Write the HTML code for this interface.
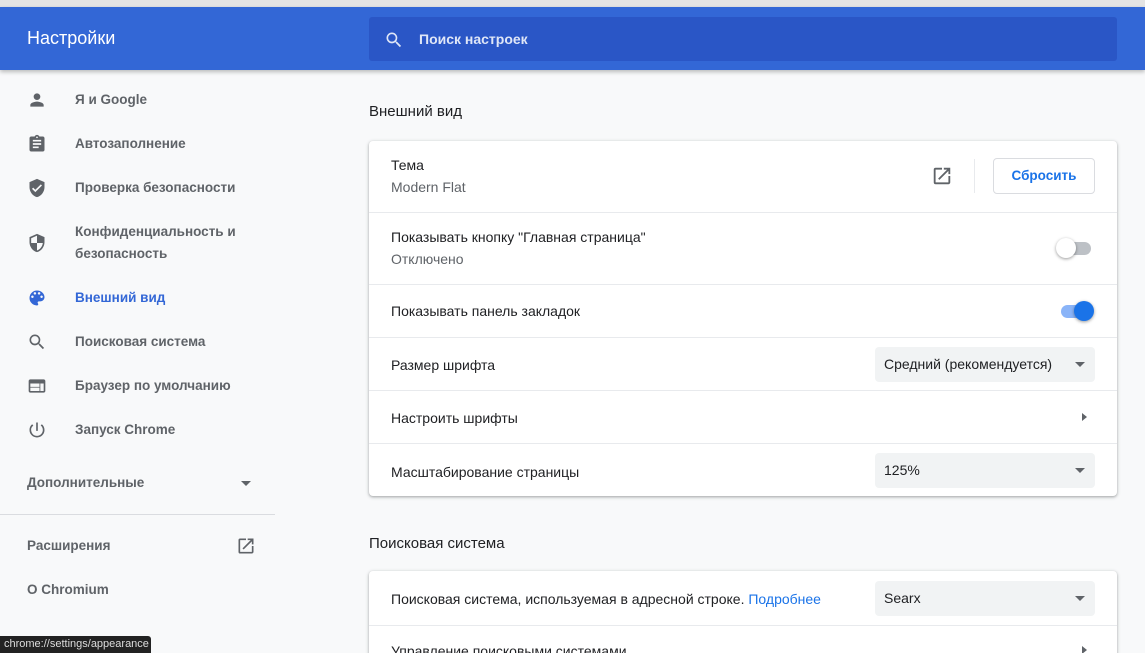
<!DOCTYPE html>
<html><head><meta charset="utf-8"><style>
*{box-sizing:border-box;margin:0;padding:0}
html,body{width:1145px;height:653px;overflow:hidden}
body{background:#f8f9fa;font-family:"Liberation Sans",sans-serif;font-size:14px;color:#202124;position:relative}
.top{position:absolute;left:0;top:0;width:1145px;height:7px;background:#e4e4e4}
.hdr{position:absolute;left:0;top:7px;width:1145px;height:63px;background:#3367d6;box-shadow:0 2px 4px rgba(0,0,0,.25)}
.hdr .t{position:absolute;left:27px;top:21px;color:#fff;font-size:18px}
.search{position:absolute;left:369px;top:10px;width:748px;height:44px;background:#2a56c6;border-radius:3px}
.search span{position:absolute;left:50px;top:14px;color:#dfe6f7;font-size:14px;font-weight:bold}
.search svg{position:absolute;left:15px;top:13px}
.nav{position:absolute;left:0;width:275px;height:44px;color:#5f6368;font-weight:bold;font-size:13.5px}
.nav svg{position:absolute;left:27px;top:50%;transform:translateY(-50%)}
.nav span{position:absolute;left:75px;top:50%;transform:translateY(-50%);line-height:22px;white-space:nowrap}
.sec{position:absolute;left:369px;font-size:15px;color:#202124}
.card{position:absolute;left:369px;width:748px;background:#fff;border-radius:4px;box-shadow:0 1px 2px rgba(60,64,67,.3),0 1px 3px 1px rgba(60,64,67,.15)}
.row{position:absolute;left:0;width:748px;border-top:1px solid #e8eaed}
.row .l{position:absolute;left:22px;white-space:nowrap}
.sel{position:absolute;left:506px;width:220px;height:35px;background:#f1f3f4;border-radius:4px}
.sel span{position:absolute;left:9px;top:9px}
.sel i{position:absolute;right:10px;top:15px;border-left:5px solid transparent;border-right:5px solid transparent;border-top:5px solid #5f6368}
.tip{position:absolute;left:0;top:636px;width:151px;height:17px;background:#222;color:#ddd;font-size:11px;padding:2px 4px;border-radius:0 3px 0 0}
</style></head><body>
<div class="top"></div>
<div class="hdr"><div class="t">Настройки</div>
<div class="search"><svg width="20" height="20" viewBox="0 0 24 24"><path fill="#dfe6f7" d="M15.5 14h-.79l-.28-.27A6.47 6.47 0 0016 9.5 6.5 6.5 0 109.5 16c1.61 0 3.09-.59 4.23-1.57l.27.28v.79l5 4.99L20.490 19l-4.99-5zm-6 0C7.01 14 5 11.990 5 9.5S7.01 5 9.5 5 14 7.01 14 9.5 11.99 14 9.5 14z"/></svg><span>Поиск настроек</span></div></div>

<div class="nav" style="top:78px"><svg width="20" height="20" viewBox="0 0 24 24"><path fill="#5f6368" d="M12 12c2.21 0 4-1.79 4-4s-1.79-4-4-4-4 1.79-4 4 1.79 4 4 4zm0 2c-2.67 0-8 1.34-8 4v2h16v-2c0-2.66-5.33-4-8-4z"/></svg><span>Я и Google</span></div>
<div class="nav" style="top:122px"><svg width="20" height="20" viewBox="0 0 24 24"><path fill="#5f6368" d="M19 3h-4.18C14.4 1.84 13.3 1 12 1s-2.4.84-2.82 2H5c-1.1 0-2 .9-2 2v14c0 1.1.9 2 2 2h14c1.1 0 2-.9 2-2V5c0-1.1-.9-2-2-2zm-7 0c.55 0 1 .45 1 1s-.45 1-1 1-1-.45-1-1 .45-1 1-1zm2 14H7v-2h7v2zm3-4H7v-2h10v2zm0-4H7V7h10v2z"/></svg><span>Автозаполнение</span></div>
<div class="nav" style="top:166px"><svg width="20" height="20" viewBox="0 0 24 24"><path fill="#5f6368" d="M12 1L3 5v6c0 5.55 3.84 10.74 9 12 5.16-1.26 9-6.45 9-12V5l-9-4zm-2 16l-4-4 1.41-1.41L10 14.170l6.59-6.59L18 9l-8 8z"/></svg><span>Проверка безопасности</span></div>
<div class="nav" style="top:210px;height:66px"><svg width="20" height="20" viewBox="0 0 24 24"><path fill="#5f6368" d="M12 1L3 5v6c0 5.55 3.84 10.74 9 12 5.16-1.26 9-6.45 9-12V5l-9-4zm0 10.99h7c-.53 4.12-3.28 7.79-7 8.94V12H5V6.3l7-3.11v8.8z"/></svg><span>Конфиденциальность и<br>безопасность</span></div>
<div class="nav" style="top:276px;color:#3367d6"><svg width="20" height="20" viewBox="0 0 24 24"><path fill="#3367d6" d="M12 3a9 9 0 000 18c.83 0 1.5-.67 1.5-1.5 0-.39-.15-.74-.39-1.01-.23-.26-.38-.61-.38-.99 0-.83.67-1.5 1.5-1.5H16c2.76 0 5-2.24 5-5 0-4.420-4.030-8-9-8zm-5.5 9c-.83 0-1.5-.67-1.5-1.5S5.67 9 6.5 9 8 9.67 8 10.5 7.33 12 6.5 12zm3-4C8.67 8 8 7.33 8 6.5S8.67 5 9.5 5s1.5.67 1.5 1.5S10.33 8 9.5 8zm5 0c-.83 0-1.5-.67-1.5-1.5S13.67 5 14.5 5s1.5.67 1.5 1.5S15.33 8 14.5 8zm3 4c-.83 0-1.5-.67-1.5-1.5S16.67 9 17.5 9s1.5.67 1.5 1.5-.67 1.5-1.5 1.5z"/></svg><span>Внешний вид</span></div>
<div class="nav" style="top:320px"><svg width="20" height="20" viewBox="0 0 24 24"><path fill="#5f6368" d="M15.5 14h-.79l-.28-.27A6.47 6.47 0 0016 9.5 6.5 6.5 0 109.5 16c1.61 0 3.09-.59 4.23-1.57l.27.28v.79l5 4.99L20.490 19l-4.99-5zm-6 0C7.01 14 5 11.99 5 9.5S7.01 5 9.5 5 14 7.01 14 9.5 11.99 14 9.5 14z"/></svg><span>Поисковая система</span></div>
<div class="nav" style="top:364px"><svg width="20" height="20" viewBox="0 0 24 24"><path fill="#5f6368" d="M20 4H4c-1.1 0-2 .9-2 2v12c0 1.1.9 2 2 2h16c1.1 0 2-.9 2-2V6c0-1.1-.9-2-2-2zm-5 14H4v-4h11v4zm0-5H4V9h11v4zm5 5h-4V9h4v9z"/></svg><span>Браузер по умолчанию</span></div>
<div class="nav" style="top:408px"><svg width="20" height="20" viewBox="0 0 24 24"><path fill="#5f6368" d="M13 3h-2v10h2V3zm4.83 2.17l-1.42 1.42A6.92 6.92 0 0119 12c0 3.87-3.13 7-7 7A6.995 6.995 0 017.58 6.58L6.17 5.17A8.932 8.932 0 003 12a9 9 0 0018 0c0-2.74-1.23-5.18-3.17-6.83z"/></svg><span>Запуск Chrome</span></div>
<div class="nav" style="top:461px"><span style="left:27px">Дополнительные</span><i style="position:absolute;left:241px;top:20px;border-left:5px solid transparent;border-right:5px solid transparent;border-top:5px solid #5f6368"></i></div>
<div style="position:absolute;left:0;top:514px;width:275px;height:1px;background:#dadce0"></div>
<div class="nav" style="top:524px"><span style="left:27px">Расширения</span><svg style="left:236px" width="20" height="20" viewBox="0 0 24 24"><path fill="#5f6368" d="M19 19H5V5h7V3H5a2 2 0 00-2 2v14a2 2 0 002 2h14c1.1 0 2-.9 2-2v-7h-2v7zM14 3v2h3.59l-9.83 9.83 1.41 1.41L19 6.41V10h2V3h-7z"/></svg></div>
<div class="nav" style="top:568px"><span style="left:27px">O Chromium</span></div>

<div class="sec" style="top:103px">Внешний вид</div>
<div class="card" style="top:141px;height:355px">
 <div class="row" style="top:0;height:71px;border-top:none"><div class="l" style="top:16px">Тема</div><div class="l" style="top:38px;color:#5f6368">Modern Flat</div>
  <svg style="position:absolute;left:562px;top:24px" width="22" height="22" viewBox="0 0 24 24"><path fill="#5f6368" d="M19 19H5V5h7V3H5a2 2 0 00-2 2v14a2 2 0 002 2h14c1.1 0 2-.9 2-2v-7h-2v7zM14 3v2h3.59l-9.83 9.83 1.41 1.41L19 6.41V10h2V3h-7z"/></svg>
  <div style="position:absolute;left:605px;top:18px;width:1px;height:34px;background:#e8eaed"></div>
  <div style="position:absolute;left:624px;top:17px;width:102px;height:36px;border:1px solid #dadce0;border-radius:4px;color:#1a73e8;font-weight:bold;font-size:13.5px;text-align:center;line-height:34px">Сбросить</div></div>
 <div class="row" style="top:71px;height:72px"><div class="l" style="top:16px">Показывать кнопку "Главная страница"</div><div class="l" style="top:38px;color:#5f6368">Отключено</div>
  <div style="position:absolute;left:694px;top:29px;width:28px;height:13px;border-radius:7px;background:#bdc1c6"></div><div style="position:absolute;left:687px;top:25px;width:20px;height:20px;border-radius:50%;background:#fff;box-shadow:0 1px 3px rgba(0,0,0,.4)"></div></div>
 <div class="row" style="top:143px;height:53px"><div class="l" style="top:18px">Показывать панель закладок</div>
  <div style="position:absolute;left:692px;top:20px;width:28px;height:13px;border-radius:7px;background:#8ab4f8"></div><div style="position:absolute;left:705px;top:16px;width:20px;height:20px;border-radius:50%;background:#1a73e8;box-shadow:0 1px 3px rgba(0,0,0,.4)"></div></div>
 <div class="row" style="top:196px;height:53px"><div class="l" style="top:19px">Размер шрифта</div><div class="sel" style="top:9px"><span>Средний (рекомендуется)</span><i></i></div></div>
 <div class="row" style="top:249px;height:53px"><div class="l" style="top:19px">Настроить шрифты</div><i style="position:absolute;left:713px;top:22px;border-top:4px solid transparent;border-bottom:4px solid transparent;border-left:5px solid #5f6368"></i></div>
 <div class="row" style="top:302px;height:53px"><div class="l" style="top:20px">Масштабирование страницы</div><div class="sel" style="top:9px"><span>125%</span><i></i></div></div>
</div>

<div class="sec" style="top:535px">Поисковая система</div>
<div class="card" style="top:571px;height:100px">
 <div class="row" style="top:0;height:54px;border-top:none"><div class="l" style="top:20px">Поисковая система, используемая в адресной строке. <span style="color:#1a73e8">Подробнее</span></div><div class="sel" style="top:10px"><span>Searx</span><i></i></div></div>
 <div class="row" style="top:54px;height:54px"><div class="l" style="top:17px">Управление поисковыми системами</div><i style="position:absolute;left:713px;top:20px;border-top:4px solid transparent;border-bottom:4px solid transparent;border-left:5px solid #5f6368"></i></div>
</div>
<div class="tip">chrome://settings/appearance</div>
</body></html>
